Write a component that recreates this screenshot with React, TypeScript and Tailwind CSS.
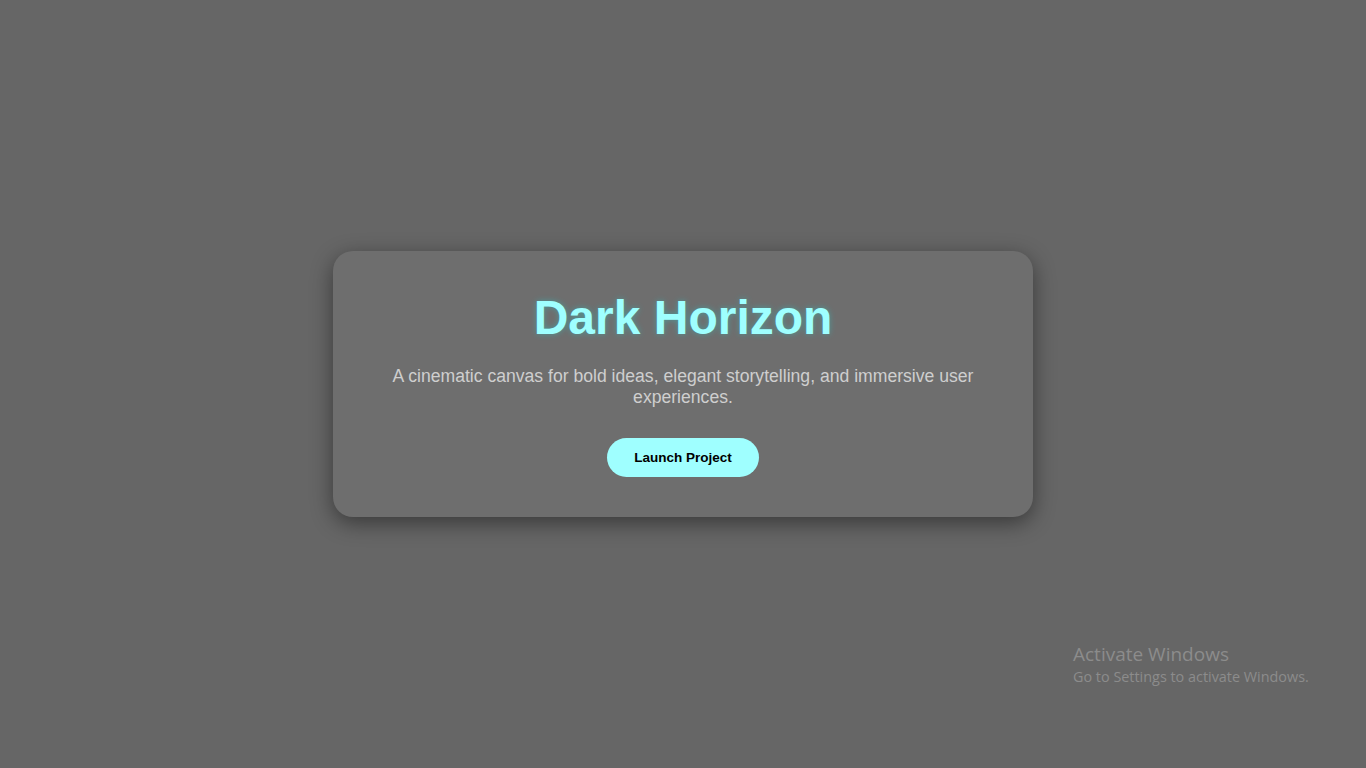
import React from "react";

// ─── Hero card ────────────────────────────────────────────────────────────────
const HeroCard = () => {
  return (
    <div className="w-[700px] rounded-[20px] bg-[#6e6e6e] px-[40px] pt-[39px] pb-[40px] text-center shadow-[0_6px_22px_rgba(0,0,0,0.45)]">
      <h1 className="text-[48px] font-bold leading-[55px] text-[#9fffff] [text-shadow:0_0_6px_rgba(0,255,255,0.3)]">
        Dark Horizon
      </h1>
      <p className="mt-[21px] text-[17.6px] leading-[21px] text-[#cfcfcf]">
        A cinematic canvas for bold ideas, elegant storytelling, and immersive
        user experiences.
      </p>
      <button className="mt-[30px] h-[39px] rounded-full bg-[#9fffff] px-[27px] pt-[1px] text-[13.5px] font-bold text-black">
        Launch Project
      </button>
    </div>
  );
};

// ─── Page ─────────────────────────────────────────────────────────────────────
export default function App() {
  return (
    <div className="relative flex min-h-screen items-center justify-center bg-[#666666] font-['Liberation_Sans',Arial,sans-serif]">
      <HeroCard />

      {/* watermark overlay */}
      <div className="pointer-events-none absolute left-[1073px] top-[642px] font-['Open_Sans','Noto_Sans',sans-serif] text-[#8c8c8c]">
        <div className="text-[19px] leading-[25px]">Activate Windows</div>
        <div className="text-[14.4px] leading-[20px]">
          Go to Settings to activate Windows.
        </div>
      </div>
    </div>
  );
}
